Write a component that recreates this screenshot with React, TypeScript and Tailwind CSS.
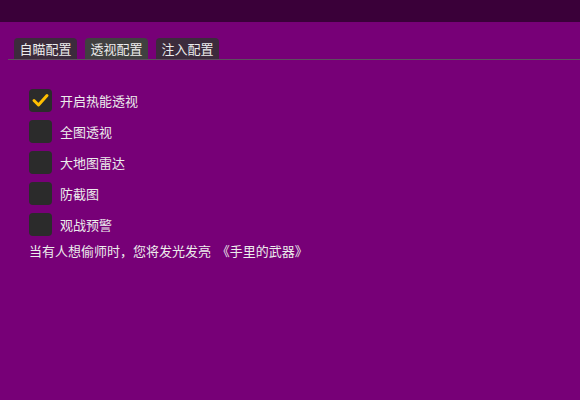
const tabs = ["自瞄配置", "透视配置", "注入配置"];

const options = [
  { label: "开启热能透视", checked: true },
  { label: "全图透视", checked: false },
  { label: "大地图雷达", checked: false },
  { label: "防截图", checked: false },
  { label: "观战预警", checked: false },
];

const CheckBox = ({ checked }: { checked: boolean }) => (
  <div className="w-[23px] h-[23px] rounded-[4px] bg-[#2b2b2b] flex items-center justify-center shrink-0">
    {checked && (
      <svg width="23" height="23" viewBox="0 0 23 23">
        <polyline points="5,11.5 9.5,16 18,6.5" fill="none" stroke="#ffbf00" strokeWidth="3" strokeLinecap="round" strokeLinejoin="round" />
      </svg>
    )}
  </div>
);

export default function App() {
  return (
    <div
      className="w-[580px] h-[400px] bg-[#770077] text-[#ececec] text-[13px] leading-none overflow-hidden flex flex-col"
      style={{ fontFamily: '"Noto Sans CJK SC", "Noto Sans", sans-serif' }}
    >
      <div className="h-[22px] bg-[#3a0039] shrink-0" />
      <div className="pt-[16px] pl-[8px]">
        <div className="flex gap-[8px] pl-[6px] border-b border-[#5e4f5e]">
          {tabs.map((t, i) => (
            <div
              key={t}
              className={`h-[21px] px-[5.5px] rounded-t-[4px] flex items-center ${i === 1 ? "bg-[#404040]" : "bg-[#3c2b3c]"}`}
            >
              {t}
            </div>
          ))}
        </div>
        <div className="pl-[21px] pt-[29px] flex flex-col gap-[8px]">
          {options.map((o) => (
            <div key={o.label} className="flex items-center gap-[8px]">
              <CheckBox checked={o.checked} />
              <span>{o.label}</span>
            </div>
          ))}
        </div>
        <div className="pl-[21px] pt-[8px] whitespace-pre">当有人想偷师时，您将发光发亮  《手里的武器》</div>
      </div>
    </div>
  );
}
